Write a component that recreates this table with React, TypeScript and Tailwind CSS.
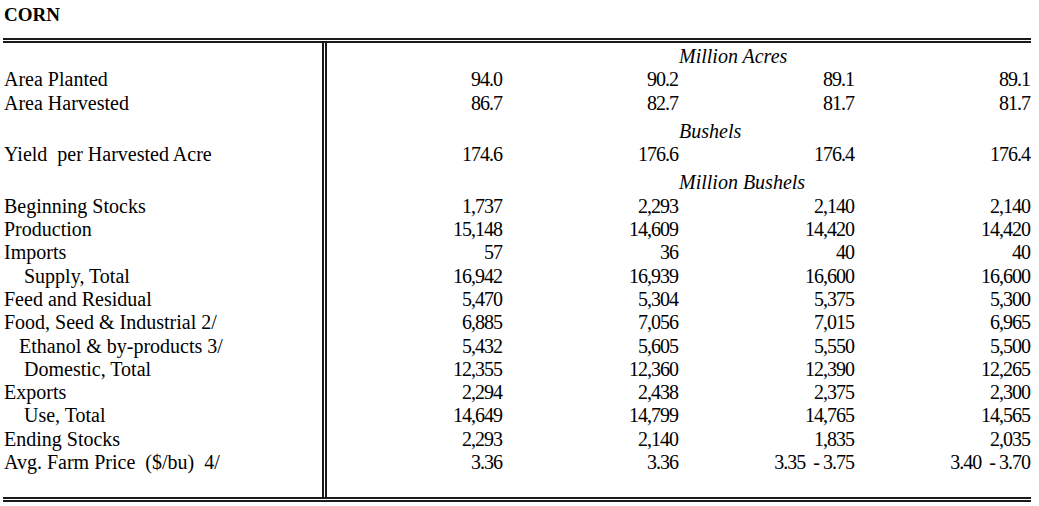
type Row = {
  label?: string;
  indent?: string;
  values?: string[];
  unit?: string;
  gap?: boolean;
};

const rows: Row[] = [
  { unit: 'Million Acres' },
  { label: 'Area Planted', values: ['94.0', '90.2', '89.1', '89.1'] },
  { label: 'Area Harvested', values: ['86.7', '82.7', '81.7', '81.7'] },
  { unit: 'Bushels', gap: true },
  { label: 'Yield  per Harvested Acre', values: ['174.6', '176.6', '176.4', '176.4'] },
  { unit: 'Million Bushels', gap: true },
  { label: 'Beginning Stocks', values: ['1,737', '2,293', '2,140', '2,140'] },
  { label: 'Production', values: ['15,148', '14,609', '14,420', '14,420'] },
  { label: 'Imports', values: ['57', '36', '40', '40'] },
  { label: 'Supply, Total', indent: 'pl-[21px]', values: ['16,942', '16,939', '16,600', '16,600'] },
  { label: 'Feed and Residual', values: ['5,470', '5,304', '5,375', '5,300'] },
  { label: 'Food, Seed & Industrial 2/', values: ['6,885', '7,056', '7,015', '6,965'] },
  { label: 'Ethanol & by-products 3/', indent: 'pl-[16px]', values: ['5,432', '5,605', '5,550', '5,500'] },
  { label: 'Domestic, Total', indent: 'pl-[21px]', values: ['12,355', '12,360', '12,390', '12,265'] },
  { label: 'Exports', values: ['2,294', '2,438', '2,375', '2,300'] },
  { label: 'Use, Total', indent: 'pl-[21px]', values: ['14,649', '14,799', '14,765', '14,565'] },
  { label: 'Ending Stocks', values: ['2,293', '2,140', '1,835', '2,035'] },
  { label: 'Avg. Farm Price  ($/bu)  4/', values: ['3.36', '3.36', '3.35  - 3.75', '3.40  - 3.70'] },
];

export default function App() {
  return (
    <div className="w-[1039px] h-[506px] bg-white text-black font-['Liberation_Serif',_'Times_New_Roman',_serif] overflow-hidden">
      <div className="h-[38px] pl-[4px] pt-[5px] text-[19px] font-bold leading-[20px]">CORN</div>

      <div className="ml-[3px] w-[1028px] border-y-[5px] border-double border-[#1a1a1a]">
        {rows.map((row, i) => {
          const pad = i === 0 ? 'pt-[2px]' : row.gap ? 'pt-[5px]' : '';
          return (
            <div key={i} className="flex leading-[23.3px]">
              <div className={`w-[319px] shrink-0 text-[20px] whitespace-pre ${pad} ${row.indent ?? 'pl-[1px]'}`}>
                {row.label ?? ''}
              </div>
              <div className={`flex-1 border-l-[5px] border-double border-[#1a1a1a] grid grid-cols-4 ${pad}`}>
                {row.unit ? (
                  <div className="col-start-3 col-span-2 text-[20px] italic">{row.unit}</div>
                ) : (
                  (row.values ?? []).map((v, j) => (
                    <div key={j} className="text-right pr-[1px] text-[20px] tracking-[-1px] whitespace-pre">
                      {v}
                    </div>
                  ))
                )}
              </div>
            </div>
          );
        })}
        <div className="flex h-[23px]">
          <div className="w-[319px] shrink-0" />
          <div className="flex-1 border-l-[5px] border-double border-[#1a1a1a]" />
        </div>
      </div>
    </div>
  );
}
